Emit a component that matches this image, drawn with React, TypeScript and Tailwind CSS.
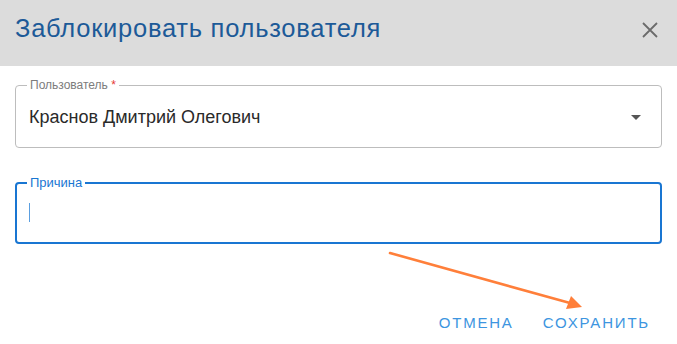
import React from 'react';

const font = { fontFamily: '"Liberation Sans", Arial, sans-serif' };

export default function App() {
    return (
        <div className="relative w-[677px] h-[344px] bg-white overflow-hidden" style={font}>
            {/* Header */}
            <div className="h-[66px] bg-[#dcdcdc] flex items-start justify-between pt-[13px] pl-[15px] pr-[18px]">
                <h1 className="text-[25.5px] leading-[30px] h-[30px] tracking-[0.75px] text-[#1c5a98] font-normal">
                    Заблокировать пользователя
                </h1>
                <button className="h-[30px] w-[18px] flex items-center justify-center mt-[2px]">
                    <svg width="16" height="16" viewBox="0 0 16 16">
                        <path d="M1 1L15 15M15 1L1 15" stroke="#6b6b6b" strokeWidth="1.8" fill="none" />
                    </svg>
                </button>
            </div>

            {/* Body */}
            <div className="px-[15px] pt-[19px]">
                {/* User select */}
                <div className="relative h-[63px] border border-[#bdbdbd] rounded-[4px] flex items-center pl-[13px] pr-[20px]">
                    <span className="absolute left-[11px] top-[-8px] px-[3px] bg-white text-[12px] leading-[14px] text-[#7c7c7c]">
                        Пользователь <span className="text-[#e53935]">*</span>
                    </span>
                    <span className="flex-1 text-[18px] leading-[22px] text-[#2a2a2a] mt-[1px]">Краснов Дмитрий Олегович</span>
                    <svg width="10" height="5" viewBox="0 0 10 5" className="mt-[2px]">
                        <path d="M0 0H10L5 5Z" fill="#555" />
                    </svg>
                </div>

                {/* Reason input */}
                <div className="relative mt-[34px] h-[62px] border-2 border-[#1976d2] rounded-[4px] pl-[12px] pt-[19px]">
                    <span className="absolute left-[10px] top-[-9px] px-[3px] bg-white text-[13px] leading-[15px] text-[#1976d2]">
                        Причина
                    </span>
                    <div className="w-[1px] h-[19px] bg-[#5b9fe0]" />
                </div>

                {/* Actions */}
                <div className="flex justify-end gap-[29px] mt-[69px] pr-[12px]">
                    <button className="text-[15px] leading-[20px] tracking-[1.8px] text-[#3d95e0]">ОТМЕНА</button>
                    <button className="text-[15px] leading-[20px] tracking-[1.8px] text-[#3d95e0]">СОХРАНИТЬ</button>
                </div>
            </div>

            {/* Annotation arrow */}
            <svg className="absolute left-0 top-0 pointer-events-none" width="677" height="344">
                <line x1="390" y1="253" x2="570" y2="303" stroke="#ff7f3a" strokeWidth="2.6" strokeLinecap="round" />
                <path d="M582 307L566 309L571 296Z" fill="#ff7f3a" />
            </svg>
        </div>
    );
}
